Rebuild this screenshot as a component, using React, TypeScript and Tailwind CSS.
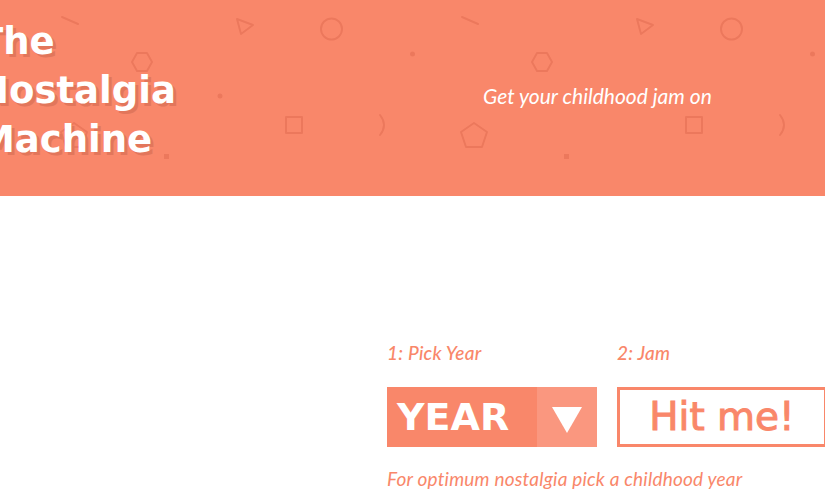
import React from 'react';

const SHAPE = '#ec785c';

const HeaderPattern = () => (
  <svg className="absolute inset-0 h-full w-full" xmlns="http://www.w3.org/2000/svg">
    <defs>
      <pattern id="retroShapes" x="0" y="0" width="400" height="200" patternUnits="userSpaceOnUse">
        <g fill="none" stroke={SHAPE} strokeWidth="2" strokeLinejoin="round" strokeLinecap="round">
          <line x1="62" y1="17" x2="78" y2="24" />
          <polygon points="237,19 253,25 241,34" />
          <circle cx="331.5" cy="29" r="10.5" />
          <polygon points="132,62 137,53 147,53 152,62 147,71 137,71" />
          <rect x="286" y="117" width="16" height="16" />
          <path d="M380 115 Q388 125 380 135" />
          <polygon points="74,123 87,132 82,147 66,147 61,132" />
        </g>
        <g fill={SHAPE}>
          <circle cx="12.5" cy="54" r="2.5" />
          <circle cx="220" cy="96" r="2.5" />
          <rect x="164" y="154" width="5" height="5" />
        </g>
      </pattern>
    </defs>
    <rect width="100%" height="100%" fill="url(#retroShapes)" />
  </svg>
);

const App = () => {
  return (
    <div className="h-[497px] w-[825px] overflow-hidden bg-white">
      <header className="relative h-[196px] overflow-hidden bg-[#f9876a]">
        <HeaderPattern />
        <div className="relative flex h-full items-start">
          <h1 className="-ml-[22px] mt-[17px] w-[300px] font-['DejaVu_Sans',sans-serif] text-[37px] font-bold leading-[49px] text-white [text-shadow:3px_3px_0_#e2765b]">
            The
            <br />
            Nostalgia
            <br />
            Machine
          </h1>
          <p className="ml-[205px] mt-[82px] font-['Lato',sans-serif] text-[21px] italic leading-[28px] text-white">
            Get your childhood jam on
          </p>
        </div>
      </header>

      <main className="ml-[387px] mt-[145px]">
        <div className="flex gap-5">
          <div className="w-[210px] shrink-0">
            <label className="block font-['Lato',sans-serif] text-[19px] font-medium italic leading-6 tracking-[0.25px] text-[#f9876a]">
              1: Pick Year
            </label>
            <div className="mt-[22px] flex h-[60px] bg-[#f9876a]">
              <span className="flex flex-1 items-center pl-[10px] font-['DejaVu_Sans',sans-serif] text-[38px] font-bold text-white">
                YEAR
              </span>
              <span className="flex w-[60px] items-center justify-center bg-[#fa977f] pt-[6px]">
                <svg width="30" height="26" viewBox="0 0 30 26">
                  <polygon points="0,0 30,0 15,26" fill="#ffffff" />
                </svg>
              </span>
            </div>
          </div>
          <div className="w-[210px] shrink-0">
            <label className="block font-['Lato',sans-serif] text-[19px] font-medium italic leading-6 tracking-[0.25px] text-[#f9876a]">
              2: Jam
            </label>
            <button
              type="button"
              className="mt-[22px] flex h-[60px] w-[210px] items-center justify-center border-[3px] border-[#f9876a] bg-white font-['DejaVu_Sans',sans-serif] text-[39px] text-[#f9876a] [-webkit-text-stroke:1px_#f9876a]"
            >
              Hit me!
            </button>
          </div>
        </div>
        <p className="mt-[20px] font-['Lato',sans-serif] text-[19px] font-normal italic leading-6 tracking-[0.2px] text-[#f9876a]">
          For optimum nostalgia pick a childhood year
        </p>
      </main>
    </div>
  );
};

export default App;
